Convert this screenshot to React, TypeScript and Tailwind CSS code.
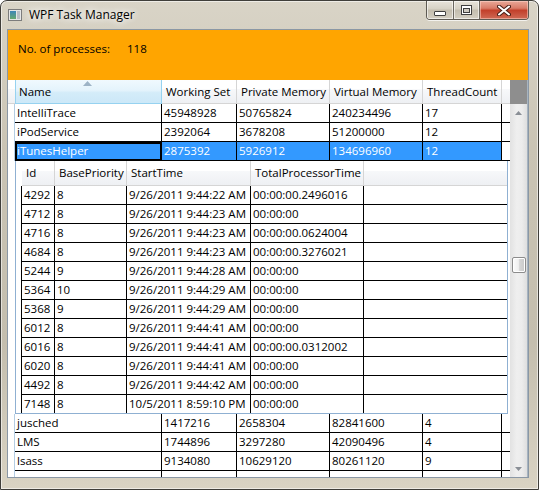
import clsx from "clsx";

const FONT = "font-['Segoe_UI','Open_Sans',sans-serif] text-[11.5px] text-black";
const HEADER_BG =
  "bg-[linear-gradient(#ffffff_0%,#ffffff_40%,#f7f8fa_41%,#eef0f3_100%)]";

const COLS = [
  { label: "Name", w: "w-[147px]" },
  { label: "Working Set", w: "w-[75px]" },
  { label: "Private Memory", w: "w-[93px]" },
  { label: "Virtual Memory", w: "w-[93px]" },
  { label: "ThreadCount", w: "w-[79px]" },
];

const DETAIL_COLS = [
  { label: "Id", w: "w-[33px]" },
  { label: "BasePriority", w: "w-[72px]" },
  { label: "StartTime", w: "w-[124px]" },
  { label: "TotalProcessorTime", w: "w-[113px]" },
];

const TOP_ROWS = [
  ["IntelliTrace", "45948928", "50765824", "240234496", "17"],
  ["iPodService", "2392064", "3678208", "51200000", "12"],
];
const SELECTED = ["iTunesHelper", "2875392", "5926912", "134696960", "12"];
const BOTTOM_ROWS = [
  ["jusched", "1417216", "2658304", "82841600", "4"],
  ["LMS", "1744896", "3297280", "42090496", "4"],
  ["lsass", "9134080", "10629120", "80261120", "9"],
  ["", "", "", "", ""],
];

const THREADS = [
  ["4292", "8", "9/26/2011 9:44:22 AM", "00:00:00.2496016"],
  ["4712", "8", "9/26/2011 9:44:23 AM", "00:00:00"],
  ["4716", "8", "9/26/2011 9:44:23 AM", "00:00:00.0624004"],
  ["4684", "8", "9/26/2011 9:44:23 AM", "00:00:00.3276021"],
  ["5244", "9", "9/26/2011 9:44:28 AM", "00:00:00"],
  ["5364", "10", "9/26/2011 9:44:29 AM", "00:00:00"],
  ["5368", "9", "9/26/2011 9:44:29 AM", "00:00:00"],
  ["6012", "8", "9/26/2011 9:44:41 AM", "00:00:00"],
  ["6016", "8", "9/26/2011 9:44:41 AM", "00:00:00.0312002"],
  ["6020", "8", "9/26/2011 9:44:41 AM", "00:00:00"],
  ["4492", "8", "9/26/2011 9:44:42 AM", "00:00:00"],
  ["7148", "8", "10/5/2011 8:59:10 PM", "00:00:00"],
];

function ProcessRow({ cells, selected }: { cells: string[]; selected?: boolean }) {
  return (
    <div className="flex h-[19px] shrink-0">
      <div className="w-[7px] shrink-0 border-r border-[#b4cde3]" />
      {COLS.map((c, i) => (
        <div
          key={c.label}
          className={clsx(
            "shrink-0 overflow-hidden whitespace-nowrap border-r border-b border-black pl-[2px] leading-[18px]",
            c.w,
            selected && "bg-[#3399ff] text-white",
            selected && i === 0 && "shadow-[inset_0_0_0_1px_#000,inset_1px_1px_0_1px_#000]"
          )}
        >
          {cells[i]}
        </div>
      ))}
      <div className="w-[8px] shrink-0 border-b border-black" />
    </div>
  );
}

function ThreadDetails() {
  return (
    <div className="flex shrink-0">
      <div className="w-[7px] shrink-0" />
      <div className="w-[493px] h-[253px] shrink-0 overflow-hidden border-x border-b border-[#8fb0d2] flex flex-col">
        <div className="flex h-[25px] shrink-0">
          <div className="w-[6px] shrink-0" />
          {DETAIL_COLS.map((c) => (
            <div
              key={c.label}
              className={clsx(
                "shrink-0 border-r border-b border-[#d5d5d5] pl-[4px] leading-[24px] whitespace-nowrap",
                HEADER_BG,
                c.w
              )}
            >
              {c.label}
            </div>
          ))}
          <div className={clsx("flex-1 border-b border-[#d5d5d5]", HEADER_BG)} />
        </div>
        {THREADS.map((t) => (
          <div key={t[0]} className="flex h-[19px] shrink-0">
            <div className="w-[6px] shrink-0 border-r border-black" />
            {DETAIL_COLS.map((c, i) => (
              <div
                key={c.label}
                className={clsx(
                  "shrink-0 border-r border-b border-black pl-[2px] leading-[18px] whitespace-nowrap overflow-hidden",
                  c.w
                )}
              >
                {t[i]}
              </div>
            ))}
            <div className="flex-1 border-b border-black" />
          </div>
        ))}
      </div>
      <div className="flex-1" />
    </div>
  );
}

function ScrollBar() {
  return (
    <div className="w-[18px] shrink-0 flex flex-col border-r border-[#a7b4c0]">
      <div className="h-[24px] shrink-0 bg-[#8e8e8e]" />
      <div className="flex-1 flex flex-col items-center bg-[linear-gradient(to_right,#e2e2e2,#efefef_40%,#ececec_70%,#dedede)]">
        <div className="h-[17px] shrink-0 flex items-center justify-center">
          <svg width="7" height="4" viewBox="0 0 7 4">
            <path d="M0 4 L3.5 0 L7 4 Z" fill="#8a8f96" />
          </svg>
        </div>
        <div className="h-[136px] shrink-0" />
        <div className="h-[16px] w-[14px] shrink-0 rounded-[2px] border border-[#8c8c8c] bg-[linear-gradient(to_right,#fbfbfb,#f0f0f0_45%,#d6d6d6_55%,#c9c9c9)] shadow-[inset_0_0_0_1px_#ffffff]" />
        <div className="flex-1" />
        <div className="h-[17px] shrink-0 flex items-center justify-center">
          <svg width="7" height="4" viewBox="0 0 7 4">
            <path d="M0 0 L7 0 L3.5 4 Z" fill="#8a8f96" />
          </svg>
        </div>
      </div>
    </div>
  );
}

function TitleBar() {
  return (
    <div className="h-[29px] shrink-0 flex items-start justify-between">
      <div className="flex items-center pl-[7px] pt-[7px] gap-[7px]">
        <svg width="14" height="12" viewBox="0 0 14 12">
          <defs>
            <linearGradient id="ic" x1="0" y1="0" x2="0" y2="1">
              <stop offset="0" stopColor="#3d86b8" />
              <stop offset="1" stopColor="#67a86e" />
            </linearGradient>
          </defs>
          <rect x="0.5" y="0.5" width="13" height="11" fill="#e6e6e6" stroke="#7c7c7c" />
          <rect x="2" y="2" width="6" height="8" fill="url(#ic)" />
          <rect x="9" y="2" width="3" height="8" fill="#b9bec4" />
        </svg>
        <span className="text-[12px] leading-[14px] text-black [text-shadow:0_0_6px_#fff,0_0_10px_#fff]">
          WPF Task Manager
        </span>
      </div>
      <div className="flex mr-[9px] h-[19px] rounded-b-[4px] border border-t-0 border-[#5e5a52] overflow-hidden shadow-[0_1px_0_rgba(255,255,255,0.7)]">
        <div className="w-[27px] h-full border-r border-[#6b675f] bg-[linear-gradient(#e8e4da,#d6d1c4_45%,#c3bdae_50%,#d4cfc2)] flex items-center justify-center shadow-[inset_0_0_0_1px_rgba(255,255,255,0.6)]">
          <svg width="12" height="6" viewBox="0 0 12 6" className="mt-[5px]">
            <rect x="0.5" y="1.5" width="11" height="4" rx="0.5" fill="#fff" stroke="#3f3f3f" />
          </svg>
        </div>
        <div className="w-[26px] h-full border-r border-[#6b675f] bg-[linear-gradient(#e8e4da,#d6d1c4_45%,#c3bdae_50%,#d4cfc2)] flex items-center justify-center shadow-[inset_0_0_0_1px_rgba(255,255,255,0.6)]">
          <svg width="11" height="10" viewBox="0 0 11 10">
            <rect x="0.5" y="0.5" width="10" height="9" fill="#fff" stroke="#3f3f3f" />
            <rect x="2.5" y="3.5" width="6" height="4" fill="#cfcac0" stroke="#3f3f3f" />
          </svg>
        </div>
        <div className="w-[48px] h-full bg-[linear-gradient(#e9a898,#d97c68_40%,#c2402b_52%,#cf6a55_100%)] flex items-center justify-center shadow-[inset_0_0_0_1px_rgba(255,220,210,0.5)]">
          <svg width="14" height="11" viewBox="0 0 14 11">
            <path d="M2 1.5 L12 9.5 M12 1.5 L2 9.5" stroke="#4a2018" strokeWidth="4" strokeLinecap="round" />
            <path d="M2 1.5 L12 9.5 M12 1.5 L2 9.5" stroke="#ffffff" strokeWidth="2" strokeLinecap="round" />
          </svg>
        </div>
      </div>
    </div>
  );
}

export default function App() {
  return (
    <div className={clsx("w-[539px] h-[490px] overflow-hidden bg-white", FONT)}>
      <div className="w-[539px] h-[490px] flex flex-col rounded-t-[7px] border border-[#3f3e3a] bg-[linear-gradient(#d9d4c7,#cac4b4_30%,#c4beae_70%,#d9d3c3)] shadow-[inset_0_0_0_1px_rgba(255,255,255,0.55)]">
        <TitleBar />
        <div className="flex flex-1 min-h-0">
          <div className="w-[7px] shrink-0" />
          <div className="w-[520px] shrink-0 flex flex-col bg-white shadow-[0_0_0_1px_#8a97a5]">
            <div className="h-[50px] shrink-0 bg-[#ffa500] flex items-start pl-[10px] pt-[11px] leading-[16px]">
              <span className="w-[109px]">No. of processes:</span>
              <span>118</span>
            </div>
            <div className="h-[397px] shrink-0 flex">
              <div className="w-[502px] shrink-0 flex flex-col overflow-hidden">
                <div className="flex h-[24px] shrink-0">
                  <div className={clsx("w-[7px] shrink-0 border-b border-[#d5d5d5]", HEADER_BG)} />
                  {COLS.map((c, i) => (
                    <div
                      key={c.label}
                      className={clsx(
                        "relative shrink-0 border-r border-b pl-[4px] leading-[23px] whitespace-nowrap",
                        c.w,
                        i === 0
                          ? "border-[#96d2f0] bg-[linear-gradient(#f0f9fe,#e4f3fc_45%,#d4ecf9_55%,#cce8f8)] shadow-[inset_1px_0_0_#96d2f0]"
                          : clsx("border-[#d5d5d5]", HEADER_BG)
                      )}
                    >
                      {i === 0 && (
                        <svg
                          width="9"
                          height="5"
                          viewBox="0 0 9 5"
                          className="absolute top-[1px] left-[68px]"
                        >
                          <path d="M0 5 L4.5 0 L9 5 Z" fill="#9db3c6" />
                        </svg>
                      )}
                      {c.label}
                    </div>
                  ))}
                  <div className={clsx("w-[8px] shrink-0 border-b border-[#d5d5d5]", HEADER_BG)} />
                </div>
                {TOP_ROWS.map((r) => (
                  <ProcessRow key={r[0]} cells={r} />
                ))}
                <ProcessRow cells={SELECTED} selected />
                <ThreadDetails />
                {BOTTOM_ROWS.map((r, i) => (
                  <ProcessRow key={r[0] || `empty-${i}`} cells={r} />
                ))}
              </div>
              <ScrollBar />
            </div>
          </div>
          <div className="flex-1" />
        </div>
        <div className="h-[12px] shrink-0" />
      </div>
    </div>
  );
}
